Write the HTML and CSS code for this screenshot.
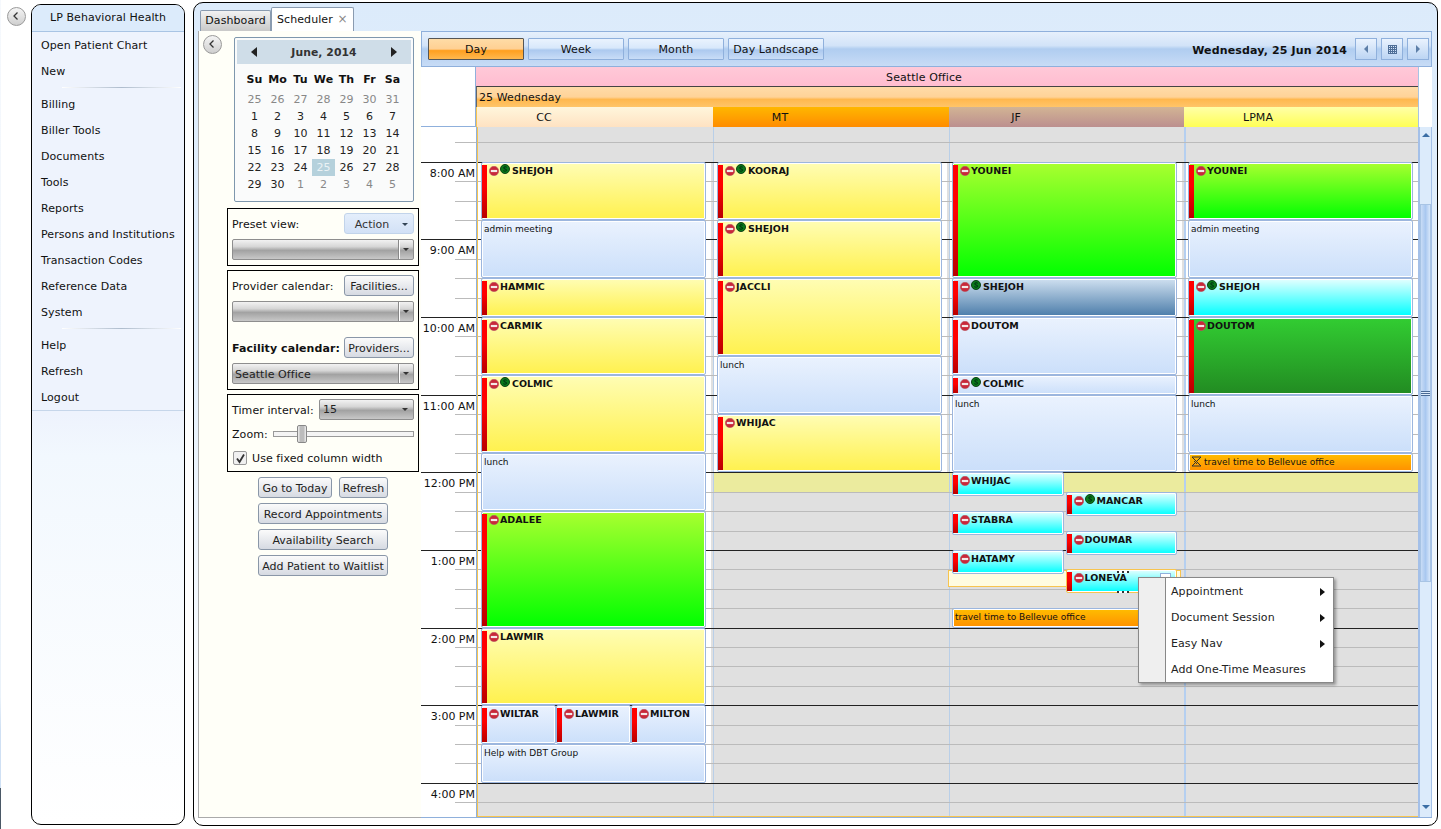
FILE: index.html
```html
<!DOCTYPE html>
<html lang="en">
<head>
<meta charset="utf-8">
<title>Scheduler</title>
<link rel="stylesheet" href="styles.css">
</head>
<body>
<svg class="defs" width="0" height="0" aria-hidden="true">
  <symbol id="no" viewBox="0 0 11 11"><circle cx="5.5" cy="5.5" r="5.2" fill="#c8283a" stroke="#b5606a" stroke-width=".6"/><rect x="2" y="4.3" width="7" height="2.400" fill="#f4e8e8"/></symbol>
  <symbol id="s" viewBox="0 0 11 11"><circle cx="5.5" cy="5.5" r="5" fill="#0a7a1a" stroke="#0a3a12"/><path d="M7.4 3.6C6.6 2.8 4 2.8 4 4.3 4 6 7.3 5 7.3 6.8 7.3 8.2 4.5 8.2 3.6 7.3" fill="none" stroke="#021" stroke-width="1"/></symbol>
  <symbol id="chev" viewBox="0 0 18 18"><path d="M10.5 5.5 7 9l3.500 3.500" fill="none" stroke="#333" stroke-width="1.300"/></symbol>
</svg>
<div class="rail"><button class="round" aria-label="Collapse"><svg width="18" height="18"><use href="#chev"/></svg></button></div>

<nav class="nav">
  <div class="nav-title">LP Behavioral Health</div>
  <div class="nav-item">Open Patient Chart</div>
  <div class="nav-item">New</div>
  <div class="nav-sep"></div>
  <div class="nav-item">Billing</div>
  <div class="nav-item">Biller Tools</div>
  <div class="nav-item">Documents</div>
  <div class="nav-item">Tools</div>
  <div class="nav-item">Reports</div>
  <div class="nav-item">Persons and Institutions</div>
  <div class="nav-item">Transaction Codes</div>
  <div class="nav-item">Reference Data</div>
  <div class="nav-item">System</div>
  <div class="nav-sep"></div>
  <div class="nav-item">Help</div>
  <div class="nav-item">Refresh</div>
  <div class="nav-item">Logout</div>
  <div class="nav-end"></div>
</nav>

<main class="main">
  <div class="tabs">
    <div class="tab">Dashboard</div>
    <div class="tab active">Scheduler <span class="x">×</span></div>
  </div>
  <div class="content">
    <aside class="side">
      <button class="round side-collapse" aria-label="Collapse"><svg width="18" height="18"><use href="#chev"/></svg></button>
      <div class="cal">
        <div class="cal-head"><span class="tri-l"></span><b>June, 2014</b><span class="tri-r"></span></div>
        <div class="cal-grid">
          <b>Su</b><b>Mo</b><b>Tu</b><b>We</b><b>Th</b><b>Fr</b><b>Sa</b>
          <i>25</i><i>26</i><i>27</i><i>28</i><i>29</i><i>30</i><i>31</i>
          <span>1</span><span>2</span><span>3</span><span>4</span><span>5</span><span>6</span><span>7</span>
          <span>8</span><span>9</span><span>10</span><span>11</span><span>12</span><span>13</span><span>14</span>
          <span>15</span><span>16</span><span>17</span><span>18</span><span>19</span><span>20</span><span>21</span>
          <span>22</span><span>23</span><span>24</span><span class="today">25</span><span>26</span><span>27</span><span>28</span>
          <span>29</span><span>30</span><i>1</i><i>2</i><i>3</i><i>4</i><i>5</i>
        </div>
      </div>
      <section class="box">
        <div class="line"><span>Preset view:</span><div class="btn action">Action<span class="caret blue"></span></div></div>
        <div class="combo"><span></span><em><u class="caret"></u></em></div>
      </section>
      <section class="box">
        <div class="line"><span>Provider calendar:</span><div class="btn">Facilities...</div></div>
        <div class="combo"><span></span><em><u class="caret"></u></em></div>
        <div class="line second"><b>Facility calendar:</b><div class="btn">Providers...</div></div>
        <div class="combo"><span>Seattle Office</span><em><u class="caret"></u></em></div>
      </section>
      <section class="box tight">
        <div class="line"><span>Timer interval:</span><div class="combo small"><span>15</span><u class="caret"></u></div></div>
        <div class="zoom"><span class="zoom-l">Zoom:</span><div class="track"><div class="thumb"></div></div></div>
        <div class="check"><span class="cb"><svg width="13" height="13" viewBox="0 0 13 13"><path d="M3 6.500 5.500 10 10 2.500" fill="none" stroke="#333" stroke-width="1.800"/></svg></span>Use fixed column width</div>
      </section>
      <div class="actions">
        <div class="act-row"><div class="btn today-btn">Go to Today</div><div class="btn refresh-btn">Refresh</div></div>
        <div class="btn wide">Record Appointments</div>
        <div class="btn wide">Availability Search</div>
        <div class="btn wide">Add Patient to Waitlist</div>
      </div>
    </aside>

    <section class="sched">
      <div class="toolbar">
        <div class="view on">Day</div>
        <div class="view">Week</div>
        <div class="view">Month</div>
        <div class="view">Day Landscape</div>
        <div class="date">Wednesday, 25 Jun 2014</div>
        <div class="nb"><span class="mini-l"></span></div>
        <div class="nb"><span class="mini-g"></span></div>
        <div class="nb"><span class="mini-r"></span></div>
      </div>
      <div class="heads">
        <div class="corner"></div>
        <div class="head-main">
          <div class="facility">Seattle Office</div>
          <div class="dayrow">25 Wednesday</div>
          <div class="provs">
            <div class="prov p-cc"><span>CC</span></div>
            <div class="prov p-mt"><span>MT</span></div>
            <div class="prov p-jf"><span>JF</span></div>
            <div class="prov p-lp"><span>LPMA</span></div>
          </div>
        </div>
        <div class="corner-r"></div>
      </div>
      <div class="body">
        <div class="viewport">
          <div class="canvas">
            <div class="gutter">
              <div class="g q"></div><div class="g q"></div>
              <div class="g h">8:00 AM</div><div class="g q"></div><div class="g q"></div><div class="g q"></div>
              <div class="g h">9:00 AM</div><div class="g q"></div><div class="g q"></div><div class="g q"></div>
              <div class="g h">10:00 AM</div><div class="g q"></div><div class="g q"></div><div class="g q"></div>
              <div class="g h">11:00 AM</div><div class="g q"></div><div class="g q"></div><div class="g q"></div>
              <div class="g h">12:00 PM</div><div class="g q"></div><div class="g q"></div><div class="g q"></div>
              <div class="g h">1:00 PM</div><div class="g q"></div><div class="g q"></div><div class="g q"></div>
              <div class="g h">2:00 PM</div><div class="g q"></div><div class="g q"></div><div class="g q"></div>
              <div class="g h">3:00 PM</div><div class="g q"></div><div class="g q"></div><div class="g q"></div>
              <div class="g h">4:00 PM</div><div class="g q"></div>
            </div>
            <div class="grid-area">
              <div class="col-bgs">
                <div class="bg bg-cc w1"></div><div class="bg bg-mt w2"></div><div class="bg bg-mt w3"></div><div class="bg bg-lp w4"></div>
              </div>
              <div class="slots">
                <div class="sl"></div><div class="sl"></div>
                <div class="sl hr"></div><div class="sl"></div><div class="sl"></div><div class="sl"></div>
                <div class="sl hr"></div><div class="sl"></div><div class="sl"></div><div class="sl"></div>
                <div class="sl hr"></div><div class="sl"></div><div class="sl"></div><div class="sl"></div>
                <div class="sl hr"></div><div class="sl"></div><div class="sl"></div><div class="sl"></div>
                <div class="sl hr"></div><div class="sl"></div><div class="sl"></div><div class="sl"></div>
                <div class="sl hr"></div><div class="sl"></div><div class="sl"></div><div class="sl"></div>
                <div class="sl hr"></div><div class="sl"></div><div class="sl"></div><div class="sl"></div>
                <div class="sl hr"></div><div class="sl"></div><div class="sl"></div><div class="sl"></div>
                <div class="sl hr"></div><div class="sl"></div>
              </div>
              <div class="cols">
                <div class="col w1 c-cc">
                  <div class="ap yellow" style="grid-row:3/6"><i class="bar"></i><svg class="ic"><use href="#no"/></svg><svg class="ic up"><use href="#s"/></svg><b>SHEJOH</b></div>
                  <div class="ap blue" style="grid-row:6/9"><span>admin meeting</span></div>
                  <div class="ap yellow" style="grid-row:9/11"><i class="bar"></i><svg class="ic"><use href="#no"/></svg><b>HAMMIC</b></div>
                  <div class="ap yellow" style="grid-row:11/14"><i class="bar"></i><svg class="ic"><use href="#no"/></svg><b>CARMIK</b></div>
                  <div class="ap yellow" style="grid-row:14/18"><i class="bar"></i><svg class="ic"><use href="#no"/></svg><svg class="ic up"><use href="#s"/></svg><b>COLMIC</b></div>
                  <div class="ap blue" style="grid-row:18/21"><span>lunch</span></div>
                  <div class="ap lime" style="grid-row:21/27"><i class="bar"></i><svg class="ic"><use href="#no"/></svg><b>ADALEE</b></div>
                  <div class="ap yellow" style="grid-row:27/31"><i class="bar"></i><svg class="ic"><use href="#no"/></svg><b>LAWMIR</b></div>
                  <div class="ap pale" style="grid-row:31/33;grid-column:1/3"><i class="bar"></i><svg class="ic"><use href="#no"/></svg><b>WILTAR</b></div>
                  <div class="ap pale" style="grid-row:31/33;grid-column:3/5"><i class="bar"></i><svg class="ic"><use href="#no"/></svg><b>LAWMIR</b></div>
                  <div class="ap pale" style="grid-row:31/33;grid-column:5/7"><i class="bar"></i><svg class="ic"><use href="#no"/></svg><b>MILTON</b></div>
                  <div class="ap blue" style="grid-row:33/35"><span>Help with DBT Group</span></div>
                </div>
                <div class="col w2 c-mt">
                  <div class="ap yellow" style="grid-row:3/6"><i class="bar"></i><svg class="ic"><use href="#no"/></svg><svg class="ic up"><use href="#s"/></svg><b>KOORAJ</b></div>
                  <div class="ap yellow" style="grid-row:6/9"><i class="bar"></i><svg class="ic"><use href="#no"/></svg><svg class="ic up"><use href="#s"/></svg><b>SHEJOH</b></div>
                  <div class="ap yellow" style="grid-row:9/13"><i class="bar"></i><svg class="ic"><use href="#no"/></svg><b>JACCLI</b></div>
                  <div class="ap blue" style="grid-row:13/16"><span>lunch</span></div>
                  <div class="ap yellow" style="grid-row:16/19"><i class="bar"></i><svg class="ic"><use href="#no"/></svg><b>WHIJAC</b></div>
                </div>
                <div class="col w3 c-jf">
                  <div class="ap lime" style="grid-row:3/9"><i class="bar"></i><svg class="ic"><use href="#no"/></svg><b>YOUNEI</b></div>
                  <div class="ap steel" style="grid-row:9/11"><i class="bar"></i><svg class="ic"><use href="#no"/></svg><svg class="ic up"><use href="#s"/></svg><b>SHEJOH</b></div>
                  <div class="ap blue" style="grid-row:11/14"><i class="bar"></i><svg class="ic"><use href="#no"/></svg><b>DOUTOM</b></div>
                  <div class="ap blue" style="grid-row:14/15"><i class="bar"></i><svg class="ic"><use href="#no"/></svg><svg class="ic up"><use href="#s"/></svg><b>COLMIC</b></div>
                  <div class="ap blue" style="grid-row:15/19"><span>lunch</span></div>
                  <div class="ap aqua short lh" style="grid-row:19/20;grid-column:1/4"><i class="bar"></i><svg class="ic"><use href="#no"/></svg><b>WHIJAC</b></div>
                  <div class="ap aqua short rh" style="grid-row:20/21;grid-column:4/7"><i class="bar"></i><svg class="ic"><use href="#no"/></svg><svg class="ic up"><use href="#s"/></svg><b>MANCAR</b></div>
                  <div class="ap aqua short lh" style="grid-row:21/22;grid-column:1/4"><i class="bar"></i><svg class="ic"><use href="#no"/></svg><b>STABRA</b></div>
                  <div class="ap aqua short rh" style="grid-row:22/23;grid-column:4/7"><i class="bar"></i><svg class="ic"><use href="#no"/></svg><b>DOUMAR</b></div>
                  <div class="ap aqua short lh" style="grid-row:23/24;grid-column:1/4"><i class="bar"></i><svg class="ic"><use href="#no"/></svg><b>HATAMY</b></div>
                  <div class="ghost" style="grid-row:24/25"></div>
                  <div class="ap aqua short rh sel" style="grid-row:24/25;grid-column:4/7"><i class="bar"></i><svg class="ic"><use href="#no"/></svg><b>LONEVA</b><em class="mini"></em><s class="grip top"></s><s class="grip bot"></s></div>
                  <div class="ap orange" style="grid-row:26/27"><span>travel time to Bellevue office</span></div>
                </div>
                <div class="col w4 c-lp">
                  <div class="ap lime" style="grid-row:3/6"><i class="bar"></i><svg class="ic"><use href="#no"/></svg><b>YOUNEI</b></div>
                  <div class="ap blue" style="grid-row:6/9"><span>admin meeting</span></div>
                  <div class="ap aqua" style="grid-row:9/11"><i class="bar"></i><svg class="ic"><use href="#no"/></svg><svg class="ic up"><use href="#s"/></svg><b>SHEJOH</b></div>
                  <div class="ap forest" style="grid-row:11/15"><i class="bar"></i><svg class="ic"><use href="#no"/></svg><b>DOUTOM</b></div>
                  <div class="ap blue" style="grid-row:15/18"><span>lunch</span></div>
                  <div class="ap orange" style="grid-row:18/19"><svg class="trav" viewBox="0 0 11 11"><path d="M1 1h9L1 10h9M1 1l9 9M3 5l3 3" fill="none" stroke="#333"/></svg><span>travel time to Bellevue office</span></div>
                </div>
              </div>
            </div>
          </div>
        </div>
        <div class="scroll">
          <span class="sc-up"></span>
          <div class="sc-thumb"><span class="grip3"></span></div>
          <span class="sc-dn"></span>
        </div>
      </div>
    </section>
  </div>
</main>

<div class="menu">
  <div class="mi">Appointment<span class="arr"></span></div>
  <div class="mi">Document Session<span class="arr"></span></div>
  <div class="mi">Easy Nav<span class="arr"></span></div>
  <div class="mi">Add One-Time Measures</div>
</div>
</body>
</html>
```
FILE: styles.css
```css
* { box-sizing: border-box; }
html, body { margin: 0; height: 100%; }
body {
  width: 1441px; height: 829px; overflow: hidden; position: relative;
  display: flex; align-items: flex-start;
  background: #fff;
  font: 11px "DejaVu Sans", sans-serif; letter-spacing: .08px; color: #111;
}
.defs { position: absolute; }
button { padding: 0; font: inherit; }
b { font-weight: bold; }
i, em, u, s { font-style: normal; text-decoration: none; }

.round {
  width: 19px; height: 19px; border-radius: 50%; border: 1px solid #9a9a9a;
  background: linear-gradient(#f4f4f4, #cfcfcf); display: block; line-height: 0;
}
.round svg { margin-left: -1px; margin-top: -1px; }
.rail {
  width: 31px; height: 829px; padding: 7px 0 0 6px; flex: none;
  border-left: 1px solid #eaf2fa;
  border-image: linear-gradient(#f6f9fd 0, #eaf2fa 84%, #cfe0f4 88%, #cfe0f4 95%, #4a5866 95%, #4a5866 100%) 1;
}

.nav {
  flex: none; width: 154px; height: 821px; margin-top: 4px;
  border: 1px solid #000; border-radius: 10px; overflow: hidden;
  background: linear-gradient(#eef3fd 0, #eef3fd 50%, #f2f8fe 55%, #fff 100%);
}
.nav-title { height: 27px; line-height: 25px; text-align: center; background: #dcebfb; border-bottom: 1px solid #a9c4e4; }
.nav-item { height: 26px; line-height: 28px; padding-left: 9px; }
.nav-sep { height: 7px; margin: 0 3px 0 30px; background: linear-gradient(90deg,#fff,#aebccd 50%,#fff) 0 3px/100% 1px no-repeat; }
.nav-end { border-top: 1px solid #c6d6ea; }

.main {
  flex: none; width: 1245px; height: 824px; margin: 2px 0 0 8px;
  border: 1px solid #000; border-radius: 10px; overflow: hidden;
  background: linear-gradient(#dcebfb 0, #e4f0fc 40%, #fff 100%);
  display: flex; flex-direction: column;
}
.tabs { height: 28px; padding: 4px 0 0 6px; display: flex; align-items: flex-end; flex: none; }
.tab { height: 21px; width: 71px; line-height: 20px; text-align: center; border: 1px solid #8a9bb0; border-bottom: 0; border-radius: 2px 2px 0 0; background: linear-gradient(#f2f2f2, #c9c9c9); }
.tab.active { height: 24px; width: 83px; line-height: 23px; background: #fff; text-align: left; padding-left: 5px; }
.x { color: #888; font-size: 12px; margin-left: 1px; }

.content { display: flex; height: 787px; margin-left: 4px; width: 1234px; flex: none; }
.side { width: 223px; flex: none; background: #fffff8; position: relative; padding: 6px 0 0 28px; display: flex; flex-direction: column; align-items: flex-start; border-left: 1px solid #aaa; border-bottom: 1px solid #aaa; }
.side-collapse { position: absolute; left: 4px; top: 4px; }

.cal { width: 180px; height: 165px; margin-left: 7px; border: 1px solid #7e97ad; border-radius: 2px; padding: 2px; background: #fafbfb; }
.cal-head { height: 24px; background: #cfdde8; display: flex; align-items: center; justify-content: space-between; padding: 0 14px; }
.cal-head b { font-size: 10.8px; color: #333; }
.tri-l, .tri-r { width: 0; height: 0; border: 5px solid transparent; }
.tri-l { border-right: 6px solid #222; border-left: 0; }
.tri-r { border-left: 6px solid #222; border-right: 0; }
.cal-grid { display: grid; grid-template-columns: repeat(7, 23px); grid-template-rows: 21px repeat(6, 17px); justify-content: start; padding: 6px 0 0 6px; text-align: center; line-height: 17px; color: #222; }
.cal-grid b { line-height: 20px; color: #111; }
.cal-grid i { color: #888; }
.cal-grid .today { background: #b5d1dc; color: #eaf2f5; }

.box { width: 192px; border: 1px solid #000; padding: 4px 4px 5px; margin-top: 4px; }
.cal + .box { margin-top: 6px; }
.box.tight { padding-bottom: 3px; }
.line { display: flex; justify-content: space-between; align-items: center; height: 21px; }
.line > span, .line > b { padding-top: 2px; }
.line.second { margin-top: 15px; }
.line .combo.small { width: 95px; }
.btn { height: 21px; line-height: 21px; width: 70px; text-align: center; border: 1px solid #8a97a8; border-radius: 3px; background: linear-gradient(#fbfbfb, #d6dae2); white-space: nowrap; color: #222; flex: none; letter-spacing: 0; }
.btn.action { background: linear-gradient(#e4eefb, #d2e1f6); border-color: #c2d4ea; position: relative; padding-right: 14px; color: #333; }
.caret { display: inline-block; width: 0; height: 0; border: 3px solid transparent; border-top: 3px solid #333; border-bottom: 0; }
.caret.blue { position: absolute; right: 5px; top: 9px; border-top-color: #345; }
.combo { height: 21px; margin-top: 5px; display: flex; border: 1px solid #8e8e8e; border-radius: 2px; background: linear-gradient(#f2f2f2 0, #d6d6d6 35%, #a2a2a2 55%, #c8c8c8 100%); }
.combo span { flex: 1; padding-left: 2px; line-height: 21px; color: #222; }
.combo em { width: 15px; border-left: 1px solid #888; position: relative; box-shadow: inset 1px 0 0 #fff; display: flex; align-items: center; justify-content: center; }
.combo.small { margin-top: 0; align-items: center; padding-right: 5px; }
.combo.small span { padding-left: 3px; line-height: 21px; }
.zoom { display: flex; align-items: center; height: 18px; margin-top: 5px; }
.zoom-l { width: 41px; flex: none; }
.track { flex: 1; height: 6px; border: 1px solid #999; background: #f4f4f4; position: relative; }
.thumb { position: absolute; left: 23px; top: -7px; width: 10px; height: 18px; border: 1px solid #888; border-radius: 2px; background: linear-gradient(90deg,#f0f0f0,#bcbcbc 30%,#bcbcbc 70%,#f0f0f0); }
.check { display: flex; align-items: center; gap: 5px; height: 20px; margin-top: 5px; padding-left: 1px; }
.cb { width: 14px; height: 14px; border: 1px solid #999; border-radius: 2px; background: #f0f0f0; line-height: 0; }

.actions { margin: 5px 0 0 31px; display: flex; flex-direction: column; gap: 5px; width: 130px; }
.act-row { display: flex; justify-content: space-between; }
.today-btn { width: 74px; }
.refresh-btn { width: 49px; }
.wide { width: 130px; }

.sched { width: 1011px; flex: none; display: flex; flex-direction: column; }
.toolbar {
  height: 36px; flex: none; display: flex; align-items: center; gap: 4px; padding: 0 2px 0 6px;
  border: 1px solid #8fb0dc;
  background: linear-gradient(#e6f0fc 0, #d2e3f8 40%, #b0cdf0 50%, #c8dcf6 100%);
}
.view { width: 96px; height: 22px; line-height: 22px; text-align: center; border: 1px solid #8fb0dc; border-radius: 1px; background: linear-gradient(#eaf3fe 0, #d8e8fb 45%, #acc9ef 55%, #c9ddf7 100%); }
.view.on { border-color: #555; background: linear-gradient(#ffdca6 0, #ffd093 50%, #ff9f1f 58%, #ffb84f 100%); }
.date { margin-left: auto; margin-right: 4px; padding-top: 2px; font-weight: bold; letter-spacing: .15px; }
.nb { width: 22px; height: 22px; border: 1px solid #8fb0dc; background: linear-gradient(#eaf3fe, #bcd5f3); display: flex; align-items: center; justify-content: center; }
.mini-l, .mini-r { width: 0; height: 0; border: 4px solid transparent; }
.mini-l { border-right: 4px solid #5d7fa8; border-left: 0; }
.mini-r { border-left: 4px solid #5d7fa8; border-right: 0; }
.mini-g { width: 9px; height: 9px; background: repeating-linear-gradient(#4f6f98 0 1px, transparent 1px 2px), repeating-linear-gradient(90deg,#4f6f98 0 1px, transparent 1px 2px); }

.heads { display: flex; height: 60px; flex: none; background: #fff; }
.corner { width: 55px; border-bottom: 1px solid #8fb0dc; border-right: 1px solid #8fb0dc; }
.head-main { width: 942px; flex: none; display: flex; flex-direction: column; }
.corner-r { flex: 1; border-left: 1px solid #a8c4e4; }
.facility { height: 19px; line-height: 21px; text-align: center; padding-right: 46px; background: linear-gradient(#ffc9d8, #ffbdd0); }
.dayrow { height: 21px; line-height: 22px; padding-left: 2px; border-top: 1px solid #444; border-left: 1px solid #666; background: linear-gradient(#ffdba8 0, #ffd398 50%, #ffb84f 62%, #ffc569 100%); }
.provs { display: flex; height: 20px; }
.prov { line-height: 22px; text-align: center; }
.prov span { display: block; width: 134px; }
.p-cc { width: 237px; background: linear-gradient(#fff6dc, #ffe2c2); border-left: 1px solid #f7c44f; }
.p-mt { width: 236px; background: linear-gradient(#ffb700, #ff8c00); }
.p-jf { width: 235px; background: linear-gradient(#d2b494, #bc8f8f); }
.p-lp { width: 234px; background: linear-gradient(#ffffa8, #ffff55); }
.p-lp span { width: 148px; }

.body { display: flex; height: 691px; flex: none; border-bottom: 1px solid #8fb0dc; }
.viewport { width: 997px; flex: none; overflow: hidden; }
.canvas { display: flex; margin-top: -4px; height: 694px; }
.gutter { width: 56px; flex: none; display: grid; grid-auto-rows: 19.4175px; background: #fff; border-right: 1px solid #8fb0dc; }
.g { min-height: 0; text-align: right; white-space: nowrap; letter-spacing: 0; }
.g.q::before { content: ""; display: block; height: 1px; margin-left: 34px; background: #bbb; }
.g.h { border-top: 1px solid #222; line-height: 21px; height: 19.4175px; padding-right: 1px; }
.grid-area { width: 941px; flex: none; height: 694px; overflow: hidden; display: grid; grid-template-columns: 940px; align-items: start; border-left: 1px solid #f7c44f; border-bottom: 1px solid #f7c44f; }
.grid-area > * { grid-area: 1 / 1; }
.col-bgs { display: flex; height: 700px; }
.w1 { width: 235px; }
.w2 { width: 236px; }
.w3 { width: 235px; }
.w4 { width: 234px; }
.bg { flex: none; background-color: #e0e0e0; }
.bg + .bg { border-left: 1px solid #b9cfe8; }
.bg-cc { background: linear-gradient(#e0e0e0 39px, transparent 39px, transparent 660px, #e0e0e0 660px), linear-gradient(#e0e0e0, #e0e0e0) right / 2px 100% no-repeat, #fff; }
.bg-mt { background: linear-gradient(#e0e0e0 39px, transparent 39px, transparent 350px, #ebeb9e 350px, #ebeb9e 369px, #e0e0e0 369px), linear-gradient(#e0e0e0, #e0e0e0) right / 2px 100% no-repeat, #fff; }
.bg-lp { background: linear-gradient(#e0e0e0 39px, #fff 39px, #fff 350px, #ebeb9e 350px, #ebeb9e 369px, #e0e0e0 369px); }
.bg.w4 { border-left: 2px solid #b5cff0; }
.slots { display: grid; grid-auto-rows: 19.4175px; }
.sl { border-top: 1px solid #bbb; height: 19.4175px; }
.sl.hr { border-top-color: #222; }
.cols { display: flex; }
.col { flex: none; display: grid; grid-template-columns: repeat(6, 1fr); grid-template-rows: repeat(36, 19.4175px); }
.c-cc { padding: 0 7px 0 3px; }
.c-mt { padding: 0 7px 0 4px; }
.c-jf { padding: 0 7px 0 3px; }
.c-lp { padding: 0 5px 0 4px; }
.ap {
  grid-column: 1 / 7; position: relative; overflow: hidden; min-width: 0;
  border: 1px solid #9cb6de; border-radius: 2px; box-shadow: inset 0 0 0 1px #fff;
  padding: 1px 3px 0 0; display: flex; align-items: flex-start; font-size: 9.500px; line-height: 13px; letter-spacing: 0;
}
.ap span { padding: 1px 0 0 2px; white-space: nowrap; font-size: 9px; }
.ap b { white-space: nowrap; }
.bar { width: 5px; flex: none; align-self: stretch; margin: 1px 2px 1px 0; background: linear-gradient(#ff0000 40%, #b80000); }
.ic { width: 10px; height: 10px; flex: none; margin: 2px 1px 0 0; }
.ic.up { margin: 0 2px 0 0; }
.trav { width: 11px; height: 11px; flex: none; margin: 1px 0 0 2px; }
.yellow { background: linear-gradient(#fffdb4, #fff14e); }
.blue { background: linear-gradient(#eaf2fe, #cbdffa); }
.pale { background: linear-gradient(#eaf2fe, #cbdffa); }
.lime { background: linear-gradient(#a9ff2f, #00ff00); }
.steel { background: linear-gradient(#cfe0f0, #4c7daa); }
.aqua { background: linear-gradient(#e5ffff, #00ffff); }
.forest { background: linear-gradient(#32cd32, #228b22); }
.orange { background: linear-gradient(#ffbd00, #ff9000); }
.short { height: 24px; align-self: start; z-index: 2; }
.lh { margin-right: 1px; }
.rh { margin-left: 1px; }
.ghost { grid-column: 1 / 7; height: 17px; margin: 1px -4px 0; background: #fffce0; border: 1px solid #f7c44f; z-index: 1; }
.sel { border-color: #f7c44f; overflow: visible; z-index: 3; }
.mini { position: absolute; right: 5px; top: 3px; width: 11px; height: 10px; border: 1px solid #8fb0dc; background: #fff; }
.grip { position: absolute; left: 50px; width: 12px; height: 2px; background: repeating-linear-gradient(90deg,#333 0 2px,#fff 2px 5px); }
.grip.top { top: 1px; }
.grip.bot { bottom: -1px; }

.scroll { flex: 1; background: #dcebfb; border-left: 2px solid #a4c0e8; border-right: 1px solid #a4c0e8; display: flex; flex-direction: column; align-items: center; position: relative; }
.sc-up, .sc-dn { width: 0; height: 0; border: 4px solid transparent; }
.sc-up { border-bottom: 4px solid #3b6ea5; border-top: 0; margin-top: 6px; }
.sc-dn { border-top: 4px solid #3b6ea5; border-bottom: 0; margin-top: 223px; }
.sc-thumb { width: 100%; height: 378px; margin-top: 67px; border: 1px solid #a8c4e4; background: linear-gradient(90deg,#c8dcf6,#a9c8f0 50%,#d6e6fa); display: flex; align-items: center; justify-content: center; }
.grip3 { width: 9px; height: 5px; background: repeating-linear-gradient(#4a6a95 0 1px, #dcebfb 1px 2px); }

.menu {
  position: absolute; z-index: 10; left: 1138px; top: 577px; width: 196px; height: 106px;
  background: linear-gradient(90deg,#efefef 26px,#888 26px,#888 27px,#fff 27px);
  border: 1px solid #888; box-shadow: 2px 2px 3px rgba(0,0,0,.35);
  padding: 1px 0 0 32px;
}
.mi { height: 26px; line-height: 26px; position: relative; color: #222; }
.arr { position: absolute; right: 8px; top: 9px; width: 0; height: 0; border: 4px solid transparent; border-left: 5px solid #111; border-right: 0; }
```
